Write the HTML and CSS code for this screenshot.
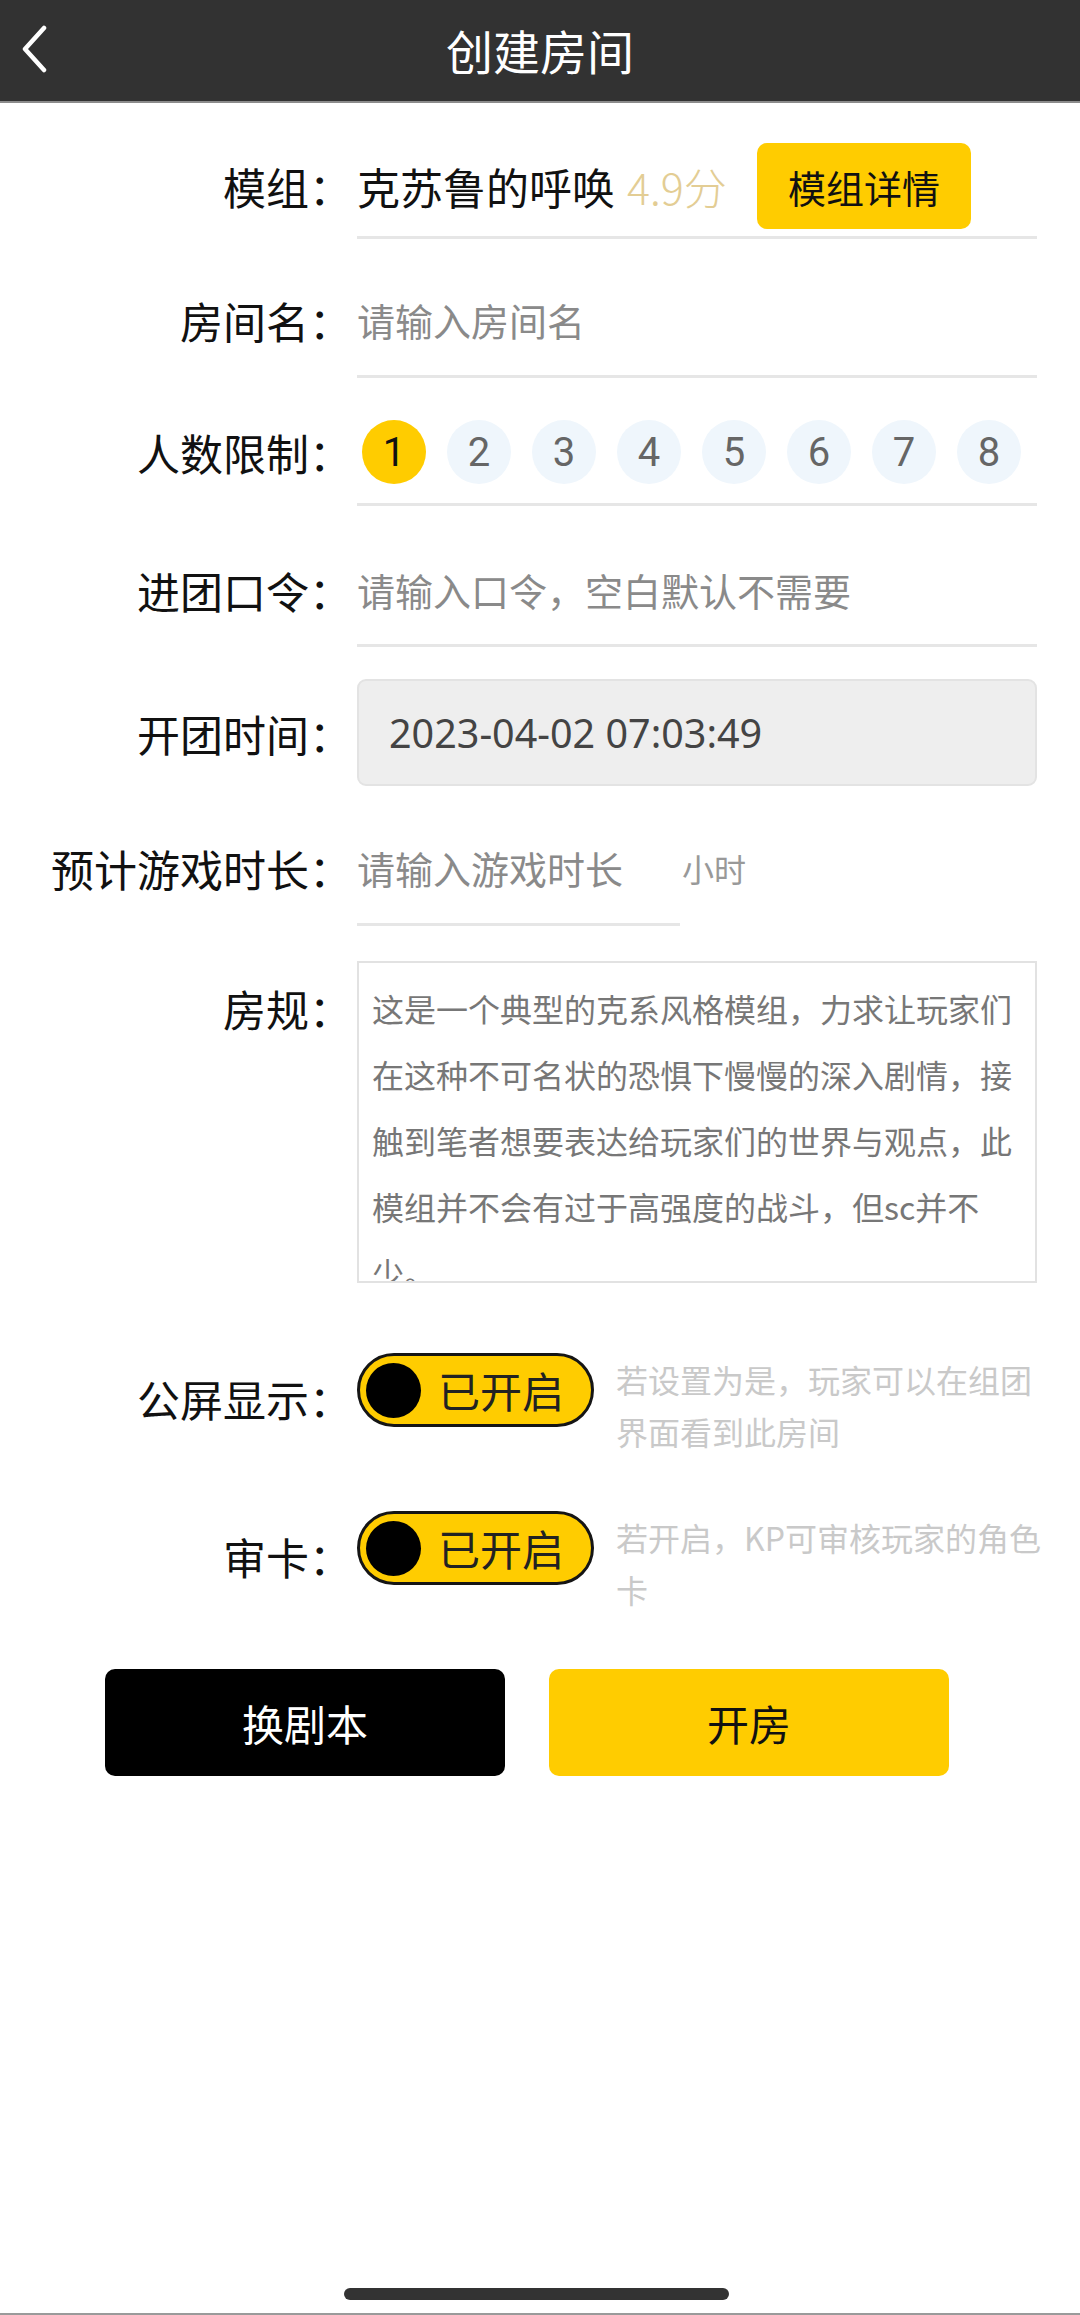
FILE: index.html
```html
<!DOCTYPE html>
<html lang="zh-CN">
<head>
<meta charset="utf-8">
<title>创建房间</title>
<link rel="stylesheet" href="styles.css">
</head>
<body>
<div class="screen">
  <header class="topbar">
    <div class="back">
      <svg width="30" height="48" viewBox="0 0 30 48"><path d="M24 3 L5 24 L24 45" fill="none" stroke="#fff" stroke-width="4.5" stroke-linecap="round" stroke-linejoin="round"/></svg>
    </div>
    <div class="title">创建房间</div>
    <div class="spacer"></div>
  </header>

  <main class="form">
    <div class="row row-module">
      <div class="label lh-86">模组：</div>
      <div class="field f-module">
        <span class="value">克苏鲁的呼唤</span>
        <span class="score">4.9分</span>
        <button class="detail-btn">模组详情</button>
      </div>
    </div>

    <div class="row row-name">
      <div class="label lh-60">房间名：</div>
      <div class="field f-text"><span class="placeholder">请输入房间名</span></div>
    </div>

    <div class="row row-count">
      <div class="label lh-64">人数限制：</div>
      <div class="field f-count">
        <span class="num active">1</span>
        <span class="num">2</span>
        <span class="num">3</span>
        <span class="num">4</span>
        <span class="num">5</span>
        <span class="num">6</span>
        <span class="num">7</span>
        <span class="num">8</span>
      </div>
    </div>

    <div class="row row-pass">
      <div class="label lh-60">进团口令：</div>
      <div class="field f-text f-pass"><span class="placeholder">请输入口令，空白默认不需要</span></div>
    </div>

    <div class="row row-time">
      <div class="label lh-107">开团时间：</div>
      <div class="datebox">2023-04-02 07:03:49</div>
    </div>

    <div class="row row-dur">
      <div class="label lh-60">预计游戏时长：</div>
      <div class="field f-text f-dur"><span class="placeholder">请输入游戏时长</span></div>
      <span class="unit">小时</span>
    </div>

    <div class="row row-rule">
      <div class="label lh-93">房规：</div>
      <div class="rulebox">这是一个典型的克系风格模组，力求让玩家们在这种不可名状的恐惧下慢慢的深入剧情，接触到笔者想要表达给玩家们的世界与观点，此模组并不会有过于高强度的战斗，但sc并不少。</div>
    </div>

    <div class="row row-switch row-public">
      <div class="label lh-74 sw-label">公屏显示：</div>
      <div class="toggle"><span class="knob"></span><span class="toggle-text">已开启</span></div>
      <div class="hint">若设置为是，玩家可以在组团界面看到此房间</div>
    </div>

    <div class="row row-switch row-card">
      <div class="label lh-74 sw-label">审卡：</div>
      <div class="toggle"><span class="knob"></span><span class="toggle-text">已开启</span></div>
      <div class="hint">若开启，KP可审核玩家的角色卡</div>
    </div>

    <div class="actions">
      <button class="btn btn-dark">换剧本</button>
      <button class="btn btn-yellow">开房</button>
    </div>
  </main>

  <div class="home-bar"></div>
</div>
</body>
</html>
```

FILE: styles.css
```css
* { box-sizing: border-box; }

html, body {
  margin: 0;
  padding: 0;
  background: #fff;
}

body {
  font-family: "Noto Sans CJK SC", "Noto Sans", sans-serif;
  color: #111;
}

.screen {
  position: relative;
  width: 1080px;
  height: 2315px;
  overflow: hidden;
  background: #fff;
  border-bottom: 2px solid #9a9a9a;
}

/* header */
.topbar {
  height: 103px;
  background: #323232;
  border-bottom: 2px solid #8c8c8c;
  display: grid;
  grid-template-columns: 1fr auto 1fr;
  align-items: center;
}

.back {
  padding-left: 20px;
  display: flex;
  align-items: center;
  height: 100%;
  padding-bottom: 4px;
}

.title {
  color: #fff;
  font-size: 47px;
  line-height: 1;
  padding-bottom: 2px;
}

/* form */
.form {
  display: flex;
  flex-direction: column;
}

.row {
  display: flex;
  align-items: flex-start;
}

.label {
  width: 352px;
  margin-right: 5px;
  flex: none;
  display: flex;
  align-items: center;
  justify-content: flex-end;
  font-size: 43px;
  color: #111;
  white-space: nowrap;
}

.lh-86 { height: 86px; }
.lh-60 { height: 60px; }
.lh-64 { height: 64px; }
.lh-107 { height: 107px; }
.lh-93 { height: 93px; }
.lh-74 { height: 74px; }

.field {
  width: 680px;
  border-bottom: 3px solid #e6e6e6;
  display: flex;
  align-items: center;
}

/* row 1 */
.row-module { margin-top: 40px; }
.f-module {
  height: 96px;
  padding-bottom: 7px;
  align-items: flex-start;
}
.f-module .value,
.f-module .score {
  height: 86px;
  display: flex;
  align-items: center;
  font-size: 43px;
}
.f-module .value { color: #111; }
.f-module .score {
  color: #e3cd94;
  font-weight: 300;
  margin-left: 12px;
}
.detail-btn {
  margin-left: auto;
  margin-right: 66px;
  width: 214px;
  height: 86px;
  border: none;
  border-radius: 10px;
  background: #ffcc00;
  color: #111;
  font-family: inherit;
  font-size: 38px;
  padding: 0;
}

/* text rows */
.f-text {
  height: 88px;
  padding-bottom: 25px;
}
.f-text .placeholder {
  font-size: 38px;
  color: #8a8a8a;
  line-height: 60px;
}
.row-name { margin-top: 51px; }
.row-pass { margin-top: 54px; }
.f-pass { padding-bottom: 24px; height: 87px; }

/* count */
.row-count { margin-top: 42px; }
.f-count {
  height: 86px;
  padding-bottom: 19px;
  padding-left: 5px;
  gap: 21px;
  align-items: flex-start;
}
.num {
  width: 64px;
  height: 64px;
  border-radius: 50%;
  background: #eff6fc;
  color: #666;
  font-family: Roboto, "Noto Sans", sans-serif;
  font-size: 40px;
  display: flex;
  align-items: center;
  justify-content: center;
  flex: none;
}
.num.active {
  background: #ffcc00;
  color: #111;
}

/* date */
.row-time { margin-top: 32px; }
.datebox {
  width: 680px;
  height: 107px;
  background: #eeeeee;
  border: 2px solid #e3e3e3;
  border-radius: 9px;
  display: flex;
  align-items: center;
  padding-left: 30px;
  font-family: "Noto Sans", sans-serif;
  font-size: 39.5px;
  color: #444;
}

/* duration */
.row-dur { margin-top: 52px; }
.f-dur {
  width: 323px;
  height: 88px;
}
.unit {
  margin-left: 2px;
  height: 60px;
  display: flex;
  align-items: center;
  font-size: 32px;
  color: #999;
}

/* rules */
.row-rule { margin-top: 35px; }
.rulebox {
  width: 680px;
  height: 322px;
  border: 2px solid #e2e2e2;
  padding: 12px 13px 0 13px;
  font-size: 32px;
  line-height: 66px;
  color: #777;
  overflow: hidden;
}

/* switches */
.row-public { margin-top: 70px; }
.row-card { margin-top: 54px; }
.sw-label { margin-top: 8px; }

.toggle {
  width: 237px;
  height: 74px;
  flex: none;
  border: 3px solid #151515;
  border-radius: 37px;
  background: #ffcc00;
  display: flex;
  align-items: center;
  padding-left: 6px;
}
.knob {
  width: 55px;
  height: 55px;
  border-radius: 50%;
  background: #000;
  flex: none;
}
.toggle-text {
  margin-left: 17px;
  font-size: 42px;
  color: #222;
  line-height: 1;
}

.hint {
  margin-left: 22px;
  width: 430px;
  font-size: 32px;
  line-height: 52px;
  color: #c9c9c9;
}

/* action buttons */
.actions {
  margin-top: 54px;
  padding-left: 105px;
  display: flex;
  gap: 44px;
}
.btn {
  width: 400px;
  height: 107px;
  border: none;
  border-radius: 10px;
  font-family: inherit;
  font-size: 42px;
  padding: 0;
}
.btn-dark {
  background: #000;
  color: #fff;
}
.btn-yellow {
  background: #ffcc00;
  color: #111;
}

/* system home indicator (overlay) */
.home-bar {
  position: absolute;
  left: 344px;
  top: 2288px;
  width: 385px;
  height: 12px;
  border-radius: 6px;
  background: #333;
}
```
